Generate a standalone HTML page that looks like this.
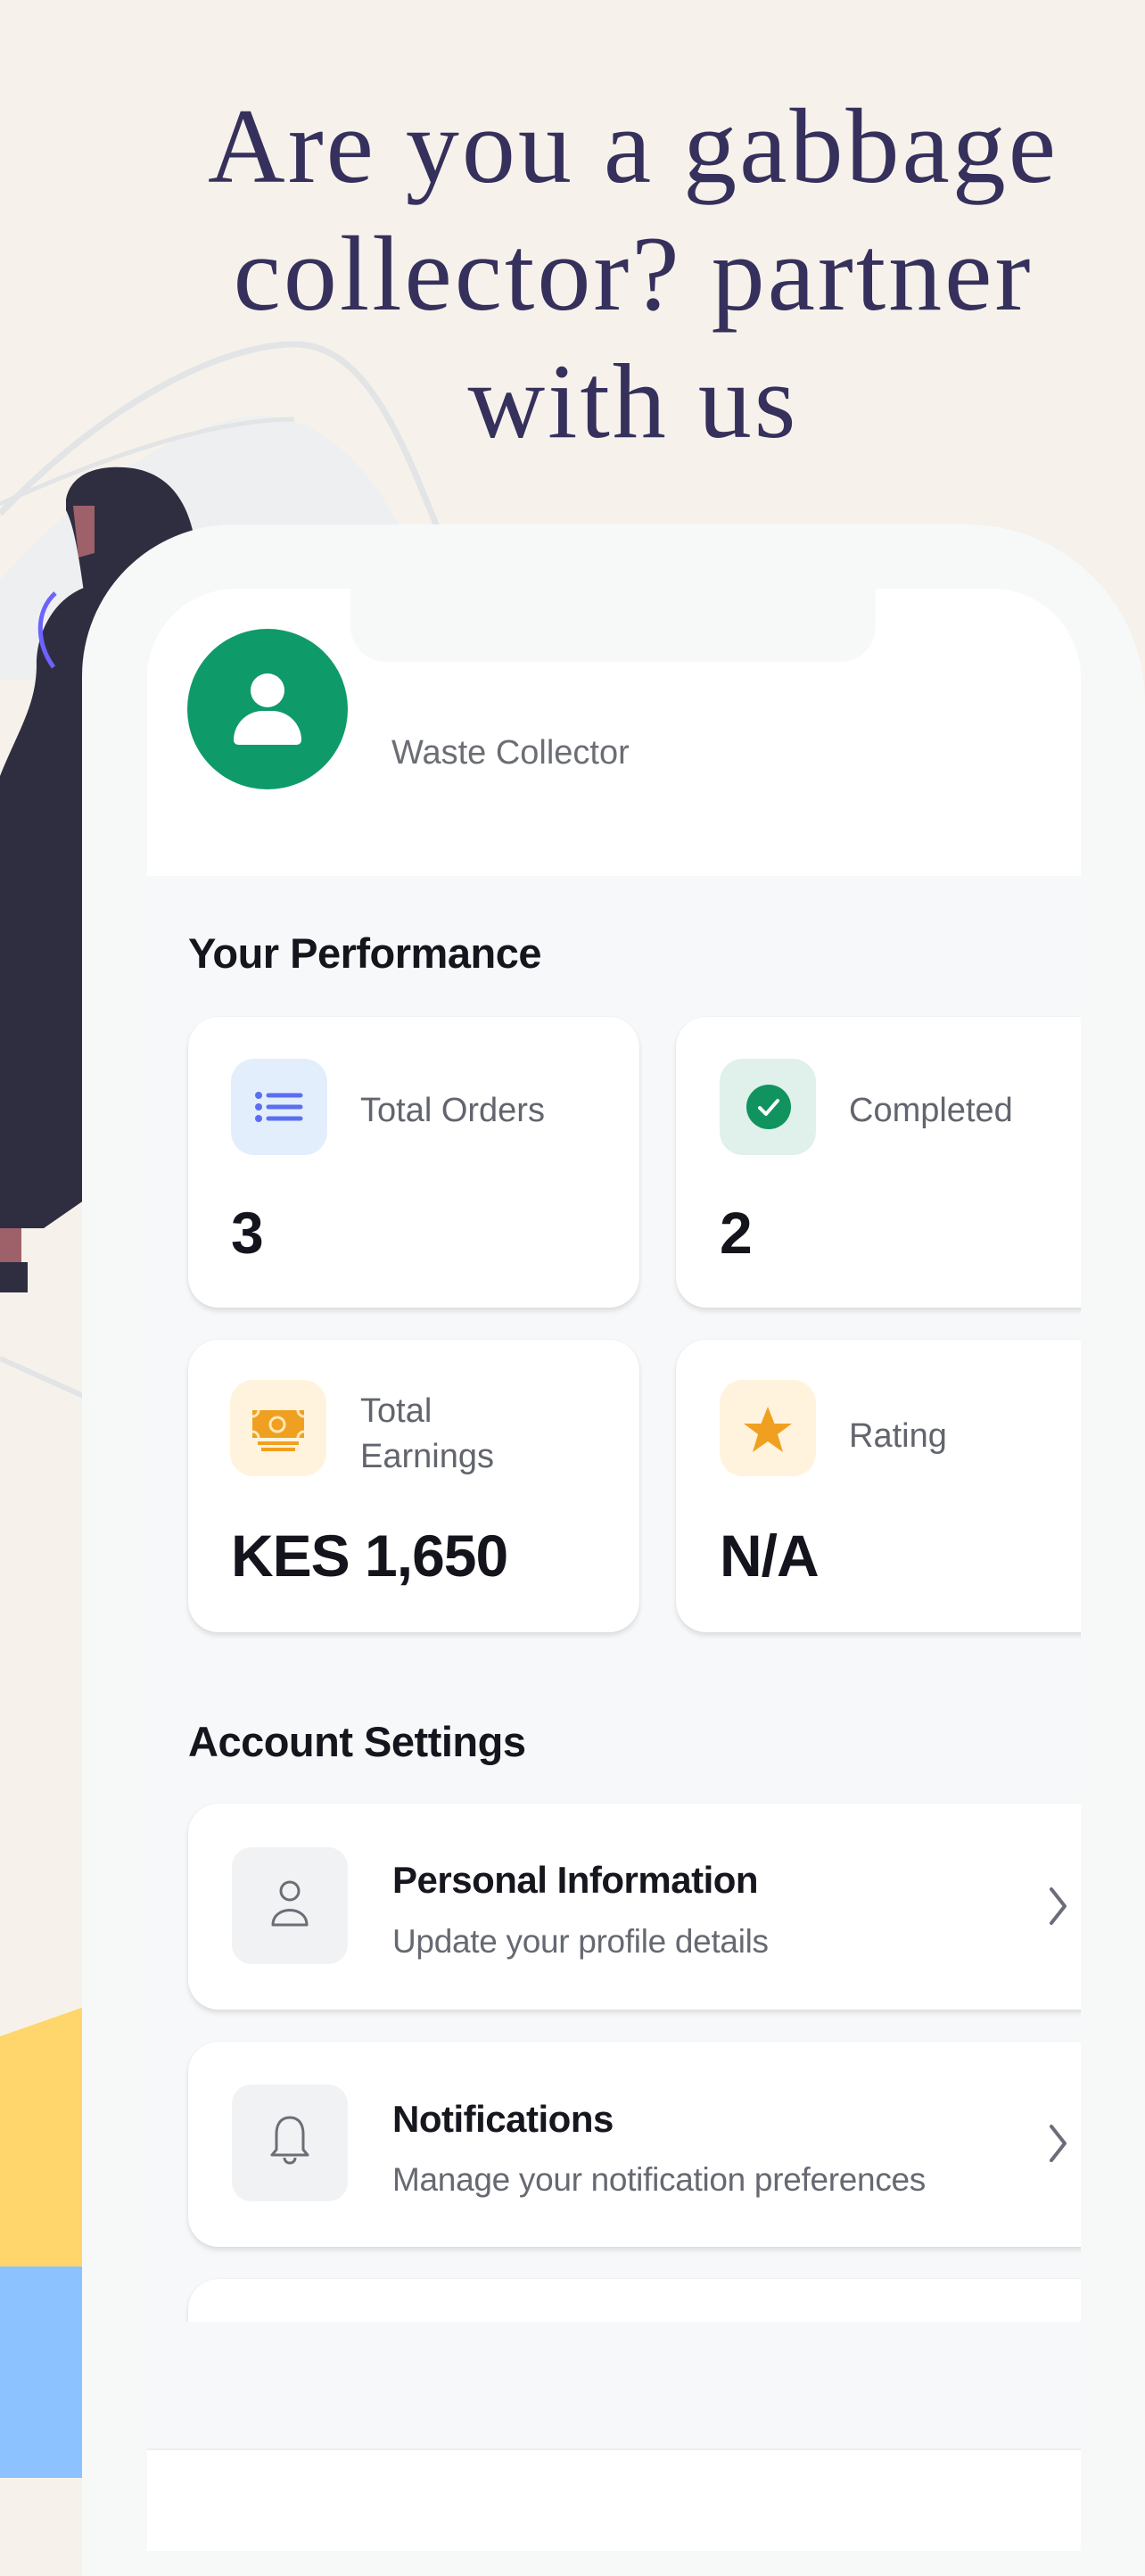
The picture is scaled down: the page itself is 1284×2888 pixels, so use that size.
<!DOCTYPE html>
<html><head><meta charset="utf-8"><style>
*{margin:0;padding:0;box-sizing:border-box}
body{width:1284px;height:2778px;background:#f6f2eb;position:relative;overflow:hidden;font-family:"Liberation Sans",sans-serif}
.abs{position:absolute}
.title{position:absolute;left:136px;width:1148px;text-align:center;font-family:"Liberation Serif",serif;font-size:120px;color:#36305c;letter-spacing:3px;line-height:1;white-space:nowrap}
.card{position:absolute;background:#fff;border-radius:34px;box-shadow:0 4px 6px rgba(0,0,0,0.10),0 0 2px rgba(0,0,0,0.06)}
.ib{position:absolute;width:108px;height:108px;border-radius:26px}
.lbl{position:absolute;font-size:38px;color:#62656d;line-height:1}
.val{position:absolute;font-size:66px;font-weight:bold;color:#14151c;line-height:1;letter-spacing:-1px}
.h{position:absolute;left:211px;font-size:47px;font-weight:bold;color:#15161d;line-height:1;letter-spacing:-0.5px}
.st{position:absolute;left:439px;font-size:42px;font-weight:bold;color:#16171e;line-height:1;letter-spacing:-0.5px}
.ss{position:absolute;left:439px;font-size:37px;color:#666971;line-height:1;letter-spacing:-0.3px}
</style></head><body>

<svg class="abs" style="left:0;top:0" width="1284" height="2778">
  <path d="M0 650 C80 560 200 470 290 466 C380 466 440 560 470 640 L470 762 L0 762 Z" fill="#eeeff0"/>
  <path d="M0 576 C120 450 250 386 330 386 C420 386 460 520 510 640" fill="none" stroke="#e2e4e6" stroke-width="7"/>
  <path d="M0 565 C100 520 230 470 330 470" fill="none" stroke="#e2e4e6" stroke-width="5"/>
  <path d="M0 1523 L100 1568" stroke="#e2e4e6" stroke-width="6"/>
  <path d="M0 2283 L100 2248 L100 2541 L0 2541 Z" fill="#ffd66b"/>
  <rect x="0" y="2541" width="100" height="237" fill="#8cc2ff"/>
  <path d="M74 560 C80 530 110 522 140 524 C200 528 222 580 222 650 L222 700 L100 700 C92 660 88 600 74 572 Z" fill="#2f2e41"/>
  <path d="M82 567 L106 567 L106 620 L88 625 Z" fill="#9e616a"/>
  <path d="M41 745 C41 700 70 660 110 655 L160 655 L160 1300 L49 1377 L0 1377 L0 870 C20 820 41 790 41 745 Z" fill="#2f2e41"/>
  <path d="M62 665 C40 685 40 720 60 748" fill="none" stroke="#6c63ff" stroke-width="5"/>
  <rect x="0" y="1377" width="24" height="38" fill="#9e616a"/>
  <rect x="0" y="1415" width="31" height="34" fill="#2f2e41"/>
</svg>

<div class="title" style="top:104px">Are you a gabbage</div>
<div class="title" style="top:247px">collector? partner</div>
<div class="title" style="top:390px">with us</div>

<div class="abs" style="left:92px;top:588px;width:1192px;height:2300px;background:#f7f9f9;border-radius:170px 200px 0 0"></div>
<div class="abs" style="left:165px;top:660px;width:1047px;height:2200px;background:#f7f8fa;border-radius:100px 100px 0 0;overflow:hidden">
  <div class="abs" style="left:0;top:0;width:1047px;height:322px;background:#fff"></div>
  <div class="abs" style="left:228px;top:-10px;width:589px;height:92px;background:#f7f9f9;border-radius:0 0 40px 40px"></div>
  <div class="abs" style="left:0;top:2085px;width:1047px;height:200px;background:#fff;border-top:2px solid #eceef0"></div>
</div>

<div class="abs" style="left:210px;top:705px;width:180px;height:180px;border-radius:50%;background:#0f9a6a"></div>
<div class="abs" style="left:281px;top:755px;width:38px;height:38px;border-radius:50%;background:#fff"></div>
<div class="abs" style="left:262px;top:797px;width:76px;height:38px;border-radius:38px 38px 6px 6px;background:#fff"></div>
<div class="abs" style="left:439px;top:823px;font-size:38px;color:#6b6e75">Waste Collector</div>

<div class="h" style="top:1045px">Your Performance</div>

<div class="abs" style="left:0;top:0;width:1212px;height:2603px;overflow:hidden">
<div class="card" style="left:211px;top:1140px;width:506px;height:326px"></div>
<div class="card" style="left:758px;top:1140px;width:520px;height:326px"></div>
<div class="card" style="left:211px;top:1502px;width:506px;height:328px"></div>
<div class="card" style="left:758px;top:1502px;width:520px;height:328px"></div>
<div class="card" style="left:211px;top:2022px;width:1060px;height:231px"></div>
<div class="card" style="left:211px;top:2289px;width:1060px;height:230px"></div>
<div class="card" style="left:211px;top:2555px;width:1060px;height:230px"></div>
</div>

<div class="ib" style="left:259px;top:1187px;background:#e3eefc"></div>
<svg class="abs" style="left:280px;top:1218px" width="70" height="46">
  <g fill="#5a6ff0"><circle cx="10" cy="10" r="4"/><circle cx="10" cy="23" r="4"/><circle cx="10" cy="36" r="4"/></g>
  <g stroke="#5a6ff0" stroke-width="5" stroke-linecap="round"><path d="M21 10H57M21 23H57M21 36H57"/></g>
</svg>
<div class="lbl" style="left:404px;top:1226px">Total Orders</div>
<div class="val" style="left:259px;top:1349px">3</div>

<div class="ib" style="left:807px;top:1187px;background:#dff1ea"></div>
<svg class="abs" style="left:837px;top:1216px" width="50" height="50">
  <circle cx="25" cy="25" r="25" fill="#10935f"/>
  <path d="M15 26 L22 33 L35 18" fill="none" stroke="#fff" stroke-width="4" stroke-linecap="round" stroke-linejoin="round"/>
</svg>
<div class="lbl" style="left:952px;top:1226px">Completed</div>
<div class="val" style="left:807px;top:1349px">2</div>

<div class="ib" style="left:258px;top:1547px;background:#fff3de"></div>
<svg class="abs" style="left:280px;top:1578px" width="64" height="54">
  <path d="M3 3H61V34H3Z" fill="#f0a020"/>
  <circle cx="31" cy="19" r="8" fill="none" stroke="#ffe7b8" stroke-width="3"/>
  <path d="M3 10A7 7 0 0 0 10 3M54 3A7 7 0 0 0 61 10M3 27A7 7 0 0 1 10 34M54 34A7 7 0 0 1 61 27" fill="none" stroke="#ffe7b8" stroke-width="3"/>
  <path d="M9 40H55M13 47H51" stroke="#f0a020" stroke-width="4"/>
</svg>
<div class="lbl" style="left:404px;top:1563px">Total</div>
<div class="lbl" style="left:404px;top:1614px">Earnings</div>
<div class="val" style="left:259px;top:1711px">KES 1,650</div>

<div class="ib" style="left:807px;top:1547px;background:#fff3de"></div>
<svg class="abs" style="left:831px;top:1574px" width="60" height="58">
  <path d="M30 3 L37.5 22 L57 22 L41 34 L47 54 L30 42 L13 54 L19 34 L3 22 L22.5 22 Z" fill="#f0a020"/>
</svg>
<div class="lbl" style="left:952px;top:1591px">Rating</div>
<div class="val" style="left:807px;top:1711px">N/A</div>

<div class="h" style="top:1929px">Account Settings</div>

<div class="ib" style="left:260px;top:2071px;width:130px;height:131px;background:#f1f2f4;border-radius:22px"></div>
<svg class="abs" style="left:295px;top:2106px" width="60" height="60">
  <circle cx="30" cy="14" r="10" fill="none" stroke="#6b6e76" stroke-width="3"/>
  <path d="M11 52 C11 30 49 30 49 52 Z" fill="none" stroke="#6b6e76" stroke-width="3" stroke-linejoin="round"/>
</svg>
<div class="st" style="left:440px;top:2087px">Personal Information</div>
<div class="ss" style="left:440px;top:2158px">Update your profile details</div>
<svg class="abs" style="left:1170px;top:2112px" width="36" height="50"><path d="M9 6 L24 25 L9 44" fill="none" stroke="#6b6e78" stroke-width="4" stroke-linecap="round" stroke-linejoin="round"/></svg>

<div class="ib" style="left:260px;top:2337px;width:130px;height:131px;background:#f1f2f4;border-radius:22px"></div>
<svg class="abs" style="left:295px;top:2370px" width="60" height="64">
  <path d="M30 4 C19 4 15 13 15 22 L15 40 L10 46 L50 46 L45 40 L45 22 C45 13 41 4 30 4 Z" fill="none" stroke="#6b6e76" stroke-width="3" stroke-linejoin="round"/>
  <path d="M24 49 C24 57 36 57 36 49" fill="none" stroke="#6b6e76" stroke-width="3"/>
</svg>
<div class="st" style="left:440px;top:2355px">Notifications</div>
<div class="ss" style="left:440px;top:2425px">Manage your notification preferences</div>
<svg class="abs" style="left:1170px;top:2378px" width="36" height="50"><path d="M9 6 L24 25 L9 44" fill="none" stroke="#6b6e78" stroke-width="4" stroke-linecap="round" stroke-linejoin="round"/></svg>

</body></html>
